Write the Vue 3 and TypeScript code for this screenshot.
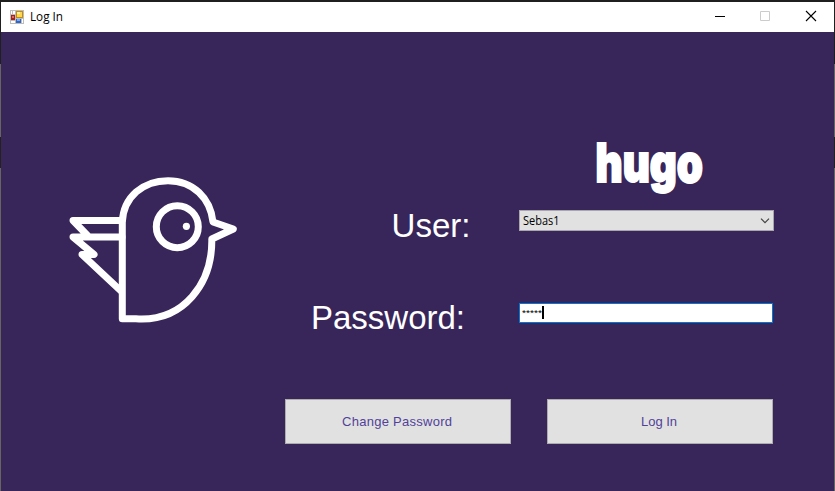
<script setup lang="ts">
import { ref } from 'vue'

const user = ref<string>('Sebas1')
const mask = ref<string>('*****')
</script>

<template>
  <div class="desktop">
    <main class="window">
      <header class="titlebar">
        <svg class="app-icon" width="14" height="14" viewBox="0 0 14 14" shape-rendering="crispEdges">
          <path fill="#bdbdbd" d="M0 0h14v14H0z" />
          <path fill="#fff" d="M1 1h1v3H1zM3 1h2v3H3zM1 11h4v2H1zM12 9h1v4h-1z" />
          <path fill="#a52218" d="M1 5h4v5H1z" />
          <path fill="#e8675a" d="M2 6h2v2H2z" />
          <path fill="#c58b0a" d="M6 1h7v7H6z" />
          <path fill="#ffd64f" d="M7 2h5v5H7z" />
          <path fill="#fff0a0" d="M7 2h3v2H7z" />
          <path fill="#3266c5" d="M6 9h5v4H6z" />
          <path fill="#79aaf3" d="M7 9h3v2H7z" />
        </svg>
        <svg class="title" width="40" height="18"><text x="0" y="13" textLength="33" lengthAdjust="spacingAndGlyphs">Log In</text></svg>
        <svg class="controls" width="110" height="14" viewBox="0 0 110 14" fill="none">
          <path d="M2 7.500h10" stroke="#000" />
          <path d="M47.500 2.500h9v9h-9z" stroke="#ccc" />
          <path d="M93 2l10 10M103 2l-10 10" stroke="#000" stroke-width="1.100" />
        </svg>
      </header>

      <section class="content">
        <svg class="bird" width="180" height="160" viewBox="64 170 180 160" fill="none" stroke="#fff" stroke-width="7" stroke-linejoin="round" stroke-linecap="round">
          <path d="M122.300 318.800V222C123.500 197 143 180.700 168 180.700C193 180.700 210.500 198 213 222L233.300 229L211.800 239C212.500 283 184 322 136 318.800Z" />
          <path d="M122 220.500H73L88 236M122 237H73L94 254.500H82L121 291" />
          <circle cx="177.300" cy="226.700" r="21" />
          <circle cx="186.400" cy="226.300" r="3.600" fill="#fff" stroke="none" />
        </svg>

        <form class="login" @submit.prevent>
          <svg class="brand" width="120" height="66"><text x="1.500" y="49.500" textLength="107.500" lengthAdjust="spacingAndGlyphs">hugo</text></svg>
          <div class="row user-row">
            <svg class="label" width="190" height="44"><text x="107.500" y="31" textLength="79" lengthAdjust="spacingAndGlyphs">User:</text></svg>
            <div class="select">
              <svg width="60" height="19"><text x="3" y="14" textLength="36.500" lengthAdjust="spacingAndGlyphs">{{ user }}</text></svg>
              <svg class="chevron" width="10" height="6" viewBox="0 0 10 6"><path d="M1 .7L5 4.700L9 .7" fill="none" stroke="#444" stroke-width="1.200" /></svg>
            </div>
          </div>
          <div class="row password-row">
            <svg class="label" width="190" height="44"><text x="27" y="31" textLength="154" lengthAdjust="spacingAndGlyphs">Password:</text></svg>
            <div class="input">
              <svg width="40" height="18"><text x="2" y="11.500" textLength="20" lengthAdjust="spacingAndGlyphs">{{ mask }}</text><path d="M22 2h2v13h-2z" /></svg>
            </div>
          </div>
          <div class="actions">
            <button type="button"><svg width="112" height="20"><text x="1" y="14" textLength="110" lengthAdjust="spacing">Change Password</text></svg></button>
            <button type="submit"><svg width="112" height="20"><text x="38" y="14" textLength="36" lengthAdjust="spacing">Log In</text></svg></button>
          </div>
        </form>
      </section>
    </main>
  </div>
</template>

<style>
body { margin: 0; overflow: hidden; }
</style>

<style scoped>
.desktop {
  width: 835px;
  height: 491px;
  box-sizing: border-box;
  padding: 2px 1px 0;
  background: linear-gradient(#1f1f1f 0 64px, #66655f 64px 137px, #24221f 137px 168px, #66655f 168px);
  font-family: "Liberation Sans", Arial, sans-serif;
}
.window { width: 833px; height: 489px; background: #38265b; }
svg { display: block; flex-shrink: 0; overflow: visible; }
.titlebar { height: 30px; display: flex; align-items: center; box-sizing: border-box; padding: 0 11px 0 9px; background: #fff; }
.app-icon { margin-top: -1px; }
.title { margin-left: 6px; font: 12px "Open Sans", "Noto Sans", sans-serif; }
.controls { margin: -2px 0 0 auto; }
.content { display: flex; height: 459px; }
.bird { margin: 138px 0 0 63px; }
.login { width: 490px; margin-left: 40px; padding-top: 100px; }
.brand { margin-left: 310px; fill: #fff; stroke: #fff; stroke-width: 2px; font: 900 53px Inter, sans-serif; }
.row { display: flex; align-items: flex-start; }
.label { fill: #fff; font-size: 33px; }
.user-row { margin-top: 8px; }
.password-row { margin-top: 48px; }
.select, .input { box-sizing: border-box; display: flex; margin-left: 45px; }
.select { width: 255px; height: 21px; margin-top: 4px; border: 1px solid #a9a6ae; background: #e1e1e1; font: 12px "Open Sans", sans-serif; }
.chevron { margin: 7px 3px 0 auto; }
.input { width: 254px; height: 20px; margin-top: 5px; border: 1px solid #0078d7; background: #fff; font-size: 9px; }
.actions { display: flex; gap: 36px; margin: 57px 0 0 1px; }
button { box-sizing: border-box; width: 226px; height: 45px; padding: 0; display: flex; align-items: center; justify-content: center; border: 1px solid #adadad; border-radius: 0; background: #e1e1e1; }
button svg { margin-left: -2px; }
button text { fill: #51419a; font: 13px "Liberation Sans", Arial, sans-serif; }
</style>
